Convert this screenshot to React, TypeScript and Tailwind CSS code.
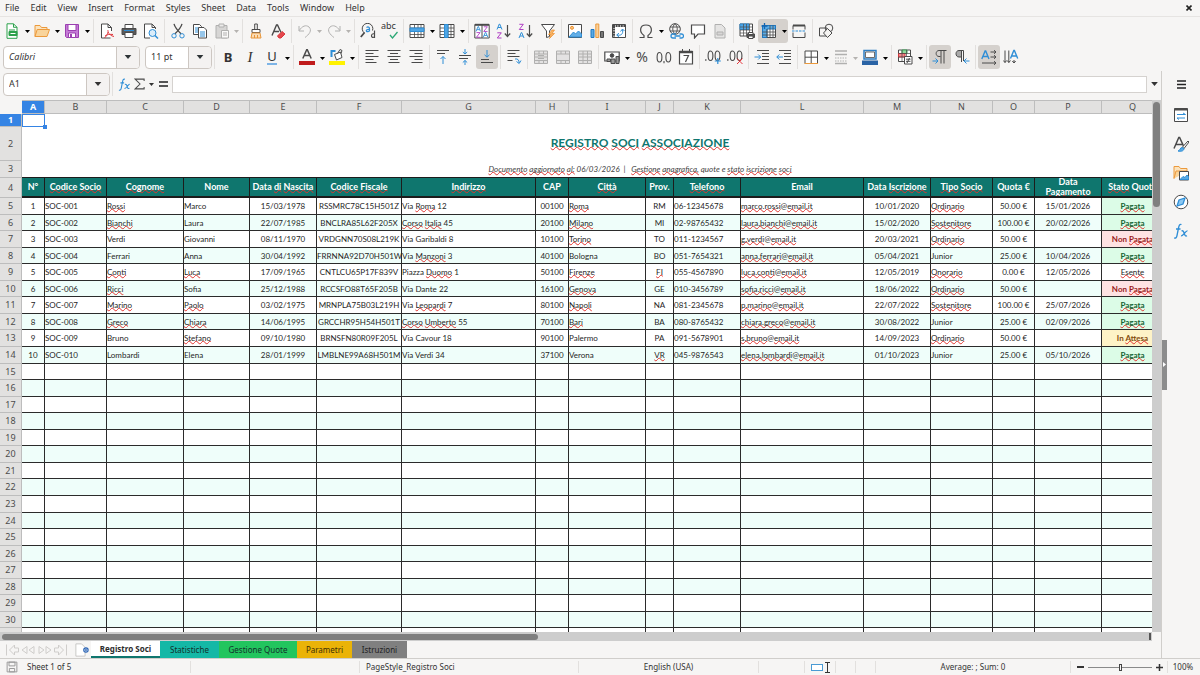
import { Fragment, useState } from 'react';
import type { ReactNode } from 'react';

const INK = '#4a4a4a';
const BLUE = '#2f8ed6';

type GlyphProps = { children: ReactNode; size?: string };

function Glyph({ children, size = 'w-4 h-4' }: GlyphProps) {
  return (
    <svg className={`${size} shrink-0`} viewBox="0 0 16 16" fill="none" stroke={INK} strokeWidth="1" aria-hidden="true">
      {children}
    </svg>
  );
}

function Caret({ className = 'w-[5px] h-[3px]' }: { className?: string }) {
  return (
    <svg className={className} viewBox="0 0 10 6" fill="currentColor" aria-hidden="true">
      <path d="M0 0h10L5 6z" />
    </svg>
  );
}

type ToolProps = { label: string; active?: boolean; disabled?: boolean; menu?: boolean; children: ReactNode };

function Tool({ label, active, disabled, menu, children }: ToolProps) {
  return (
    <div className={`flex h-6 shrink-0 rounded-[3px] ${active ? 'bg-[#d5d1cd]' : ''}`}>
      <button
        type="button"
        aria-label={label}
        disabled={disabled}
        className={`flex w-[22px] items-center justify-center ${disabled ? 'opacity-40 grayscale' : ''}`}
      >
        {children}
      </button>
      {menu && (
        <button
          type="button"
          aria-label={`${label} options`}
          disabled={disabled}
          className={`flex items-center justify-center pt-[2px] ${disabled ? 'w-[7px] text-[#b5b3b0]' : 'w-2 text-black'}`}
        >
          <Caret />
        </button>
      )}
    </div>
  );
}

function Sep() {
  return <div className="mx-[2px] h-6 w-px shrink-0 bg-[#e2e0de]" />;
}

/* ---------- standard toolbar icons ---------- */

const NewIcon = () => (
  <Glyph>
    <path d="M3 .8h6.500L13 4.300v11H3z" stroke="#2ca14b" fill="#fff" />
    <path d="M9.500 .8v3.500H13" stroke="#2ca14b" />
    <path d="M5 7h6" stroke="#2ca14b" />
    <path d="M5 8.500h8v4H5z" stroke="#2ca14b" fill="#2ca14b" />
    <path d="M6.500 10.500h5" stroke="#fff" />
  </Glyph>
);
const OpenIcon = () => (
  <Glyph>
    <path d="M1 13.500V2.500h5l1.500 2H13v2" stroke="#ec9a3c" fill="#fbe3bd" />
    <path d="M1 13.500 3.200 6.500H15.500L13 13.500z" stroke="#ec9a3c" fill="#f9d49b" />
  </Glyph>
);
const SaveIcon = () => (
  <Glyph>
    <path d="M1.500 1.500h13v13h-12l-1-1z" stroke="#9b3fb0" fill="#c57bd6" />
    <path d="M4 1.500h8v6H4z" stroke="#9b3fb0" fill="#fff" />
    <path d="M4.500 10h7v4.500h-7z" stroke="#9b3fb0" fill="#fff" />
    <path d="M6 11h2v3H6z" fill="#9b3fb0" stroke="none" />
  </Glyph>
);
const PdfIcon = () => (
  <Glyph>
    <path d="M11.500 15H2.500V1h6.500l3.500 3.500V8" fill="#fff" />
    <path d="M9 1v3.500h3.500" />
    <path d="M8.500 7c1.500 1 0 5-3 8M9 9c1 2 3 4 6 4.500M6 13c2-1.500 5-2 8-1.500" stroke="#e0383e" />
  </Glyph>
);
const PrintIcon = () => (
  <Glyph>
    <path d="M4 1.500h8V6H4z" fill="#fff" />
    <path d="M1 5.500h14v6H1z" fill="#5a5a5a" />
    <path d="M3 7.500h10" stroke={BLUE} />
    <path d="M4 9.500h8v5H4z" fill="#fff" />
  </Glyph>
);
const PreviewIcon = () => (
  <Glyph>
    <path d="M7 15H1.500V1H9l3.500 3.500V6M9 1v3.500h3.500" fill="#fff" />
    <circle cx="9.500" cy="10" r="3.500" stroke={BLUE} fill="#dbedfa" />
    <path d="m12 12.500 3 3" stroke={BLUE} strokeWidth="1.500" />
  </Glyph>
);
const CutIcon = () => (
  <Glyph>
    <path d="M4 .8c1 4 4 7 7 10M12 .8c-1 4-4 7-7 10" strokeWidth="1.300" />
    <circle cx="4" cy="12.800" r="2.200" stroke={BLUE} />
    <circle cx="12" cy="12.800" r="2.200" stroke={BLUE} />
  </Glyph>
);
const CopyIcon = () => (
  <Glyph>
    <path d="M1.500 1.500h6l2 2v8h-8z" fill="#fff" />
    <path d="M3 5h4M3 7h4M3 9h4" stroke={BLUE} />
    <path d="M6.500 4.500h5.500l2.500 2.500v8h-8z" fill="#fff" />
    <path d="M8 9h5M8 11h5M8 13h5" stroke={BLUE} />
  </Glyph>
);
const PasteIcon = () => (
  <Glyph>
    <path d="M2 2.500h11V15H2z" fill="#a9a9a9" />
    <path d="M5 1h5v3H5z" fill="#ddd" />
    <path d="M7.500 7.500h7V15h-7zM9 10h4M9 12h4" fill="#fff" />
  </Glyph>
);
const BrushIcon = () => (
  <Glyph>
    <path d="M6.700 1h2.600v5.500H6.700z" />
    <path d="M4 6.500h8v3H4z" fill="#fff" />
    <path d="M4 10h8l1 5H3z" stroke="#e8963a" fill="#fbdcb4" />
    <path d="M6.500 12v3M9.500 12v3" stroke="#e8963a" />
  </Glyph>
);
const ClearIcon = () => (
  <Glyph>
    <path d="M2 12.500 6.500 2h1L11 9.500M4 8.500h5" strokeWidth="1.400" />
    <path d="m7.500 13 4.500-4.500 3 2.500-4 4H9z" fill="#e5484d" stroke="#d9363c" />
  </Glyph>
);
const UndoIcon = ({ flip }: { flip?: boolean }) => (
  <svg className={`h-4 w-4 ${flip ? '-scale-x-100' : ''}`} viewBox="0 0 16 16" fill="none" stroke={INK} aria-hidden="true">
    <path d="M2 3v5h5M2.300 7.500C5 3 9 1.500 12 4c3.500 3.500 0 7.500-4 10.500" />
  </svg>
);
const FindIcon = () => (
  <Glyph>
    <path d="M4.500 10A5.300 5.300 0 1 1 12.500 7.500" />
    <path d="M4.500 9.500.8 14" strokeWidth="1.800" />
    <path d="M6.500 4.500c1.500-1 3-.5 3 1v3M9.500 6.500c-4-.5-4 2.500-1.500 2.200l1.500-1" stroke={BLUE} strokeWidth="1.200" />
    <path d="M14.500 7.500V15M14.500 11c-4-1.500-4 5 0 3" strokeWidth="1.200" />
  </Glyph>
);
const SpellIcon = () => (
  <span className="relative block h-4 w-4">
    <span className="absolute -left-px -top-[3px] font-['Noto_Sans'] text-[9px] leading-3 text-[#333]">abc</span>
    <svg className="absolute bottom-0 right-0 h-2 w-[9px]" viewBox="0 0 9 8" fill="none" stroke="#2ca876" strokeWidth="1.300">
      <path d="m1 4 2.500 3L8.500 1" />
    </svg>
  </span>
);
const GridIcon = ({ band }: { band: 'row' | 'col' }) => (
  <Glyph>
    <path d="M1 1.500h14v13H1z" fill="#fff" />
    <path d="M1 5h14M1 8.500h14M1 11.500h14M5.500 1.500v13M9 1.500v13M12 1.500v13" strokeWidth=".8" />
    <path d={band === 'row' ? 'M1 5h14v3.500H1z' : 'M5.500 1.500H9v13H5.500z'} fill="#4fa5e4" stroke={BLUE} />
  </Glyph>
);
const A_SHAPE = 'M0 5.500 2.300 0h.4L5 5.500M1 3.500h3';
const Z_SHAPE = 'M.3.3h4L.3 5.500h4.200';
const SortIcon = () => (
  <Glyph>
    <path d="M.8 1.500h14.400v13.500H.8z" fill="#fff" />
    <path d="M1 1.800h14" strokeWidth="2" />
    <path d="M8 2v13" />
    <g transform="translate(2 3.500) scale(.9)"><path d={A_SHAPE} stroke={BLUE} /></g>
    <g transform="translate(2.200 9.300) scale(.9)"><path d={Z_SHAPE} stroke="#b03fc4" /></g>
    <g transform="translate(9.500 3.500) scale(.9)"><path d={Z_SHAPE} stroke="#b03fc4" /></g>
    <g transform="translate(9.300 9.300) scale(.9)"><path d={A_SHAPE} stroke={BLUE} /></g>
  </Glyph>
);
const SortDirIcon = ({ desc }: { desc?: boolean }) => (
  <Glyph>
    <g transform={desc ? 'translate(1 9.500)' : 'translate(1 1)'}><path d={A_SHAPE} stroke={BLUE} /></g>
    <g transform={desc ? 'translate(1 1)' : 'translate(1 9.500)'}><path d={Z_SHAPE} stroke="#b03fc4" /></g>
    <path d="M11.500 2v11M8.800 10.500l2.700 3 2.700-3" strokeWidth="1.200" />
  </Glyph>
);
const FilterIcon = () => (
  <Glyph>
    <path d="M1.500 1.500h13L9.500 8v5.500l-3 1V8z" fill="#fff" />
    <path d="m12 7-3.500 4.500h2.500L9.500 15.500l5-5h-2.500L14.500 7z" fill="#f7b468" stroke="#ee8f2a" strokeWidth=".7" />
  </Glyph>
);
const ImageIcon = () => (
  <Glyph>
    <path d="M1.500 1.500h13v13h-13z" fill="#fff" />
    <path d="m2 14 4.500-5 2 2 3-3 3 3v3z" fill="#62aee6" stroke={BLUE} />
    <circle cx="5" cy="4.800" r="1.500" stroke="#ee8f2a" fill="#f9c98c" />
  </Glyph>
);
const ChartIcon = () => (
  <Glyph>
    <path d="M2 6.500h3v8H2z" fill="#5aaae4" stroke="#1f78c1" />
    <path d="M6.800 1h3v13.500h-3z" fill="#fad09a" stroke="#ec9a3c" />
    <path d="M11.500 8.500h3v6h-3z" fill="#777" />
  </Glyph>
);
const PivotIcon = () => (
  <Glyph>
    <path d="M1.500 1.500h13v13h-13z" fill="#fff" />
    <path d="M2 3h12M3 3v11" strokeWidth="2" strokeDasharray="2 .6" />
    <path d="M6 12c4 1 6.500-1 5.500-5.500M9.500 8.500l2-2.500 2 2M8 10.200 5.700 12 8 14" stroke={BLUE} />
  </Glyph>
);
const OmegaIcon = () => (
  <Glyph>
    <path d="M1.500 14.500h4.500v-2C1 9 1.500 2 8 2s7 7 2 10.500v2h4.500" strokeWidth="1.200" />
  </Glyph>
);
const LinkIcon = () => (
  <Glyph>
    <circle cx="7" cy="6" r="5.300" />
    <path d="M7 .7c-3 3-3 7.500 0 10.500 3-3 3-7.500 0-10.500zM2 4h10M2 8h10" strokeWidth=".9" />
    <path d="M8 15H5a1.900 1.900 0 0 1 0-4h3M11.500 11h2a1.900 1.900 0 0 1 0 4h-2M6.500 13h6" stroke={BLUE} strokeWidth="1.300" />
  </Glyph>
);
const CommentIcon = () => (
  <Glyph>
    <path d="M1.500 2h13v9H8l-3.500 4v-4h-3z" fill="#fff" strokeWidth="1.200" />
  </Glyph>
);
const PageIcon = () => (
  <Glyph>
    <path d="M3 1.500h6.500L13 5v10H3z" fill="#ccc" />
    <path d="M5 9h6v3H5z" fill="#aaa" />
  </Glyph>
);
const PrintAreaIcon = () => (
  <Glyph>
    <path d="M1 1h12.500v12H1z" fill="#fff" />
    <path d="M1 1h9v5.500H1z" fill="#4fa5e4" stroke={BLUE} />
    <path d="M1 4h12.500M1 7h12.500M1 10h12.500M4.500 1v12M7.500 1v12M10.500 1v12" strokeWidth=".7" />
    <path d="M8 11h7.500v3.500H8z" fill="#555" />
    <path d="M9.500 9.500h4.500v2H9.500zM9.500 13h4.500v2.500H9.500z" fill="#fff" />
  </Glyph>
);
const FreezeIcon = () => (
  <Glyph>
    <path d="M1.500 2.500h13v12h-13z" fill="#fff" />
    <path d="M1.500 2.500h13v3.500h-8.500v8.500H1.500z" fill="#5aaae4" stroke="#1f78c1" />
    <path d="M1.500 9h13M1.500 12h13M6 6v8.500M9 2.500v12M12 2.500v12" strokeWidth=".8" />
    <path d="M3.500 0v6M.5 3h6" stroke="#1565b0" strokeWidth="1.300" />
  </Glyph>
);
const SplitIcon = () => (
  <Glyph>
    <path d="M2 6.500v-4h12v4M2 9.500v5h12v-5" />
    <path d="M2 2.500h12" strokeWidth="2" />
    <path d="M1 8h14" stroke={BLUE} strokeDasharray="2.500 1" />
  </Glyph>
);
const ShapesIcon = () => (
  <Glyph>
    <path d="M1.500 5h7.500v8H1.500z" />
    <circle cx="11" cy="5" r="3.800" />
    <path d="m9.500 5.500 4.500 4.500-4.500 4.500L5.500 10z" fill="#f5f4f2" />
  </Glyph>
);

/* ---------- formatting toolbar icons ---------- */

const LINES: Record<string, string> = {
  left: 'M1.500 1.500h13M1.500 4.500h8M1.500 7.500h13M1.500 10.500h8M1.500 13.500h11',
  center: 'M1.500 1.500h13M4 4.500h8M1.500 7.500h13M4 10.500h8M2.500 13.500h11',
  right: 'M1.500 1.500h13M6.500 4.500h8M1.500 7.500h13M6.500 10.500h8M3.500 13.500h11',
};
const AlignIcon = ({ kind }: { kind: string }) => (
  <Glyph>
    <path d={LINES[kind]} />
  </Glyph>
);
const TopIcon = () => (
  <Glyph>
    <path d="M2 1.500h12M2 4.500h8" />
    <path d="M8 15V7.500M5.500 10 8 7.500l2.500 2.500" stroke={BLUE} />
  </Glyph>
);
const MiddleIcon = () => (
  <Glyph>
    <path d="M2 6.500h12M2 9.500h9" />
    <path d="M8 0v5M5.800 3 8 5l2.200-2M8 16v-4.500M5.800 13.500 8 11.500l2.200 2" stroke={BLUE} />
  </Glyph>
);
const BottomIcon = () => (
  <Glyph>
    <path d="M2 10.500h8M2 13.500h12" />
    <path d="M8 1v7M5.500 5.800 8 8.200l2.500-2.400" stroke={BLUE} />
  </Glyph>
);
const WrapIcon = () => (
  <Glyph>
    <path d="M1.500 1.500h12M1.500 4.500h8M1.500 7.500h12M1.500 11.500h5" />
    <path d="M9 10c3-.5 4 1 4.200 4M10.500 12.500l2.700 2 1.800-3" stroke={BLUE} />
  </Glyph>
);
const MergeIcon = ({ kind }: { kind: number }) => (
  <Glyph>
    <path d="M1.500 2h13v12.500h-13z" fill="#c8c8c8" />
    <path d="M1.500 5h13M1.500 11.500h13M6 2v3M10.500 2v3M6 11.500v3M10.500 11.500v3" />
    {kind === 0 && <path d="M1.500 8h13M5 6.500h6M5 9.500h6" />}
    {kind === 2 && <path d="M6 5v6.500M10.500 5v6.500M1.500 8h13" />}
  </Glyph>
);
const CurrencyIcon = () => (
  <Glyph>
    <path d="M.8 3h14.400V12H.8z" fill="#fff" strokeWidth="1.200" />
    <circle cx="8" cy="6.500" r="1.800" fill={INK} />
    <path d="M3 12.500h3.500V10H3zM7 14.500h4V10H7zM12 14.500h3V7.500h-3z" fill="#999" />
  </Glyph>
);
const CalendarIcon = () => (
  <Glyph>
    <path d="M1.500 2.500h13v12.500h-13z" fill="#fff" strokeWidth="1.200" />
    <path d="M1.500 3h13" strokeWidth="2.500" />
    <path d="M4.500 0v3M11.500 0v3" />
    <path d="M5.500 6.500h5L7.500 13" strokeWidth="1.200" />
  </Glyph>
);
const NumberIcon = () => (
  <Glyph>
    <path d="M3.500 3.500c-3.200 0-3.200 9.500 0 9.500s3.200-9.500 0-9.500zM12.300 3.500c-3.200 0-3.200 9.500 0 9.500s3.200-9.500 0-9.500zM8 12v2.200" strokeWidth="1.100" />
  </Glyph>
);
const DecimalIcon = ({ remove }: { remove?: boolean }) => (
  <Glyph>
    <path d="M5.500 2c-3.200 0-3.200 9.500 0 9.500s3.200-9.500 0-9.500zM12.500 2c-3.200 0-3.200 9.500 0 9.500s3.200-9.500 0-9.500z" strokeWidth="1.100" />
    <path d="M.8 10.200v1.600" strokeWidth="1.300" />
    {remove ? <path d="m10 9.500 5.500 5.500M15.500 9.500 10 15" stroke="#e5383e" /> : <path d="M12.800 9v6M9.800 12h6" stroke={BLUE} strokeWidth="1.200" />}
  </Glyph>
);
const IndentIcon = ({ out }: { out?: boolean }) => (
  <Glyph>
    <path d="M3 1.500h12M8 4.500h7M8 7.500h7M8 10.500h7M3 14.500h12" />
    <path d={out ? 'M7 8H.8M3.300 5.500.8 8l2.500 2.500' : 'M.5 8h6M4.200 5.500 6.700 8l-2.500 2.500'} stroke={BLUE} />
  </Glyph>
);
const BordersIcon = () => (
  <Glyph>
    <path d="M2 14.500V2h12.500v12.500M8.200 2v12M2 8.200h12.500" fill="#fff" />
    <path d="M1.500 14.500h13.500" stroke="#ec9a3c" />
  </Glyph>
);
const LineStyleIcon = () => (
  <Glyph>
    <path d="M2 2h12M2 5.500h12" strokeWidth="1.500" />
    <path d="M2 9h12M2 12h12" strokeDasharray="1.500 1" />
    <path d="M2 14.500h12" strokeWidth="1.500" />
  </Glyph>
);
const LineColorIcon = () => (
  <Glyph>
    <path d="M2 1.500h12v8.500H2z" stroke="#2f7fc4" strokeWidth="1.500" />
    <path d="M3.500 3h9v5.500h-9z" fill="#fff" strokeWidth=".8" />
    <path d="M0 11.500h16V16H0z" fill="#2a63a5" stroke="none" />
  </Glyph>
);
const ConditionalIcon = () => (
  <Glyph>
    <path d="M1.500 1h12v11.500h-12z" fill="#fff" />
    <path d="M5 1h5v3.500H5z" fill="#8fdc9c" stroke="#3aa657" />
    <path d="M1.500 4.500H8V8H1.500z" fill="#f0888b" stroke="#d9363c" />
    <path d="M1.500 4.500h12M1.500 8h12M5 1v11.500M9.500 1v6" strokeWidth=".7" />
    <path d="M7.500 7.500h7.500V15H7.500z" fill="#fff" />
    <path d="M9 10.200h4.500M9 12.300h4.500M12.500 9l-2.500 5" />
  </Glyph>
);
const PilcrowIcon = ({ rtl }: { rtl?: boolean }) => (
  <Glyph>
    {rtl ? (
      <>
        <path d="M5 1.500h2.500v6.500H5c-4 0-4-6.500 0-6.500z" fill="#aaa" />
        <path d="M7.500 1.500v11.500M9.500 12V1.500H5" />
        <path d="M15.500 12H10M12.500 9.500 10 12l2.500 2.500" stroke={BLUE} />
      </>
    ) : (
      <>
        <path d="M14.500 1.500H7c-3.800 0-3.800 6 0 6h1.500M9 1.500v13M12 1.500v13" />
        <path d="M.5 12h5M3.500 9.500 6 12l-2.500 2.500" stroke={BLUE} />
      </>
    )}
  </Glyph>
);
const DirectionIcon = ({ vertical }: { vertical?: boolean }) => (
  <Glyph>
    {vertical ? (
      <>
        <path d="M2 1.500v12M5.800 1.500v12M.3 11.500l1.700 2 1.700-2M4.200 11.500l1.600 2 1.700-2M11 11v3M9.300 12l1.700 2 1.700-2" />
        <path d="m7.500 9.500 3.300-8h.6l3.300 8M9 7h4.500" stroke={BLUE} strokeWidth="1.400" />
      </>
    ) : (
      <>
        <path d="M9.500 3h5M9.500 8h5M1 14h13M13 1.200 15 3l-2 1.800M13 6.200 15 8l-2 1.800M13 12.200l2 1.800-2 1.800" />
        <path d="m.8 10 3.300-8h.6l3.300 8M2.200 7.500h4.400" stroke={BLUE} strokeWidth="1.400" />
      </>
    )}
  </Glyph>
);
const FontColorIcon = () => (
  <Glyph>
    <path d="M3.800 9.500 7.700.8h.6l3.900 8.700M5.200 6.500h5.600" strokeWidth="1.500" />
    <path d="M0 12h16v4H0z" fill="#c01c1c" stroke="none" />
  </Glyph>
);
const HighlightIcon = () => (
  <Glyph>
    <path d="M2.500 8V2h4" stroke={BLUE} strokeWidth="2" />
    <path d="m5.500 5.500 6-2.500 1.500 5.500-5.500 2.500zM8.500 4.500l2.500-4 2 1-1 3" fill="#fff" />
    <path d="M0 12h16v4H0z" fill="#fff200" stroke="none" />
  </Glyph>
);
const FxIcon = ({ size }: { size?: string }) => (
  <Glyph size={size}>
    <path d="M8.500 1.500C6.500.8 6 2.500 5.500 5L4 12.500c-.4 2-1.200 3-2.800 2.300M3 6h4.500" stroke={BLUE} strokeWidth="1.300" />
    <path d="M8.500 8c1.500-.8 2.200.5 2.800 2.500s1.200 3 2.700 2.200M14.500 7.800c-2-.5-4 5.500-6.500 5" stroke={BLUE} strokeWidth="1.300" />
  </Glyph>
);

/* ---------- sheet data: words starting with "~" are flagged by the spell checker ---------- */

type Column = { key: string; width: number; title: string; align: 'left' | 'center' };

const COLUMNS: Column[] = [
  { key: 'A', width: 23, title: 'N°', align: 'center' },
  { key: 'B', width: 62, title: '~Codice ~Socio', align: 'left' },
  { key: 'C', width: 77, title: '~Cognome', align: 'left' },
  { key: 'D', width: 66, title: 'Nome', align: 'left' },
  { key: 'E', width: 67, title: 'Data ~di ~Nascita', align: 'center' },
  { key: 'F', width: 85, title: '~Codice ~Fiscale', align: 'center' },
  { key: 'G', width: 134, title: '~Indirizzo', align: 'left' },
  { key: 'H', width: 33, title: 'CAP', align: 'center' },
  { key: 'I', width: 77, title: '~Città', align: 'left' },
  { key: 'J', width: 28, title: 'Prov.', align: 'center' },
  { key: 'K', width: 67, title: '~Telefono', align: 'left' },
  { key: 'L', width: 123, title: 'Email', align: 'left' },
  { key: 'M', width: 67, title: 'Data ~Iscrizione', align: 'center' },
  { key: 'N', width: 62, title: '~Tipo ~Socio', align: 'left' },
  { key: 'O', width: 42, title: 'Quota €', align: 'center' },
  { key: 'P', width: 67, title: 'Data ~Pagamento', align: 'center' },
  { key: 'Q', width: 62, title: '~Stato Quota', align: 'center' },
  { key: '', width: 94, title: '', align: 'left' },
];

const MEMBERS: string[][] = [
  ['1', 'SOC-001', '~Rossi', 'Marco', '15/03/1978', 'RSSMRC78C15H501Z', 'Via ~Roma 12', '00100', '~Roma', 'RM', '06-12345678', '~marco.rossi @ ~email.it', '10/01/2020', '~Ordinario', '50.00 €', '15/01/2026', '~Pagata'],
  ['2', 'SOC-002', '~Bianchi', 'Laura', '22/07/1985', 'BNCLRA85L62F205X', '~Corso ~Italia 45', '20100', '~Milano', 'MI', '02-98765432', '~laura.bianchi @ ~email.it', '15/02/2020', '~Sostenitore', '100.00 €', '20/02/2026', '~Pagata'],
  ['3', 'SOC-003', 'Verdi', 'Giovanni', '08/11/1970', 'VRDGNN70S08L219K', 'Via Garibaldi 8', '10100', '~Torino', 'TO', '011-1234567', '~g.verdi @ ~email.it', '20/03/2021', '~Ordinario', '50.00 €', '', 'Non ~Pagata'],
  ['4', 'SOC-004', 'Ferrari', 'Anna', '30/04/1992', 'FRRNNA92D70H501W', 'Via ~Manzoni 3', '40100', 'Bologna', 'BO', '051-7654321', '~anna.ferrari @ ~email.it', '05/04/2021', 'Junior', '25.00 €', '10/04/2026', '~Pagata'],
  ['5', 'SOC-005', '~Conti', '~Luca', '17/09/1965', 'CNTLCU65P17F839V', 'Piazza ~Duomo 1', '50100', '~Firenze', '~FI', '055-4567890', '~luca.conti @ ~email.it', '12/05/2019', '~Onorario', '0.00 €', '12/05/2026', '~Esente'],
  ['6', 'SOC-006', '~Ricci', 'Sofia', '25/12/1988', 'RCCSFO88T65F205B', 'Via Dante 22', '16100', '~Genova', 'GE', '010-3456789', '~sofia.ricci @ ~email.it', '18/06/2022', '~Ordinario', '50.00 €', '', 'Non ~Pagata'],
  ['7', 'SOC-007', '~Marino', '~Paolo', '03/02/1975', 'MRNPLA75B03L219H', 'Via ~Leopardi 7', '80100', '~Napoli', 'NA', '081-2345678', '~p.marino @ ~email.it', '22/07/2022', '~Sostenitore', '100.00 €', '25/07/2026', '~Pagata'],
  ['8', 'SOC-008', '~Greco', '~Chiara', '14/06/1995', 'GRCCHR95H54H501T', '~Corso ~Umberto 55', '70100', '~Bari', 'BA', '080-8765432', '~chiara.greco @ ~email.it', '30/08/2022', 'Junior', '25.00 €', '02/09/2026', '~Pagata'],
  ['9', 'SOC-009', 'Bruno', '~Stefano', '09/10/1980', 'BRNSFN80R09F205L', 'Via Cavour 18', '90100', 'Palermo', 'PA', '091-5678901', '~s.bruno @ ~email.it', '14/09/2023', '~Ordinario', '50.00 €', '', 'In ~Attesa'],
  ['10', 'SOC-010', 'Lombardi', 'Elena', '28/01/1999', 'LMBLNE99A68H501M', 'Via Verdi 34', '37100', 'Verona', '~VR', '045-9876543', '~elena.lombardi @ ~email.it', '01/10/2023', 'Junior', '25.00 €', '05/10/2026', '~Pagata'],
];

const STATUS_STYLE: Record<string, string> = {
  '~Pagata': 'bg-[#dcfce7] text-[#166534] font-bold',
  'Non ~Pagata': 'bg-[#fee2e2] text-[#991b1b] font-bold',
  'In ~Attesa': 'bg-[#fef3c7] text-[#854d0e] font-bold',
};

const LAST_ROW = 30;
const BODY_ROWS = Array.from({ length: 27 }, (_, i) => i);

function Spelled({ text }: { text: string }) {
  return (
    <>
      {text.split(' ').map((word, i, all) => (
        <Fragment key={i}>
          {i > 0 && word !== '@' && all[i - 1] !== '@' && ' '}
          {word.startsWith('~') ? (
            <span className="underline decoration-[#e0342f] decoration-wavy decoration-1 -underline-offset-1 [text-decoration-skip-ink:none]">
              {word.slice(1)}
            </span>
          ) : (
            word
          )}
        </Fragment>
      ))}
    </>
  );
}

function RowHead({ n, active }: { n: number; active?: boolean }) {
  return (
    <th
      scope="row"
      className={`border-b border-r border-[#bdbdbd] p-0 text-center font-['Noto_Sans',sans-serif] text-[9px] leading-3 ${
        active ? 'bg-[#3584e4] font-bold text-white' : 'bg-[#e2e1e0] font-normal text-[#4c4c4c]'
      }`}
    >
      {n <= LAST_ROW && n}
    </th>
  );
}

function Sheet() {
  return (
    <table className="w-[1258px] table-fixed border-separate border-spacing-0 bg-white font-[Lato,sans-serif] text-[8px] leading-[10px] text-[#262626]">
      <colgroup>
        <col style={{ width: 22 }} />
        {COLUMNS.map((c) => (
          <col key={c.key} style={{ width: c.width }} />
        ))}
      </colgroup>
      <thead>
        <tr className="h-[14px]">
          <td className="bg-[#f6f5f4] p-0" />
          {COLUMNS.map((c) => (
            <th
              key={c.key}
              scope="col"
              className={`border-b border-r border-t border-[#bdbdbd] p-0 text-center font-['Noto_Sans',sans-serif] text-[9px] leading-3 ${
                c.key === 'A' ? 'bg-[#3584e4] font-bold text-white' : 'bg-[#e2e1e0] font-normal text-[#4c4c4c]'
              }`}
            >
              {c.key}
            </th>
          ))}
        </tr>
      </thead>
      <tbody>
        <tr className="h-[13px]">
          <RowHead n={1} active />
          <td className="relative p-0 outline outline-1 -outline-offset-1 outline-[#3584e4]">
            <span className="absolute -bottom-[2px] -right-[2px] block h-1 w-1 bg-[#3584e4]" />
          </td>
          <td colSpan={17} className="p-0" />
        </tr>
        <tr className="h-[34px]">
          <RowHead n={2} />
          <td colSpan={18} className="p-0 pb-[2px] text-center text-[12px] font-bold leading-4 text-[#0f766e]">
            <Spelled text="~REGISTRO ~SOCI ~ASSOCIAZIONE" />
          </td>
        </tr>
        <tr className="h-[17px]">
          <RowHead n={3} />
          <td colSpan={18} className="border-b border-[#1c1c1c] p-0 text-center italic text-[#444] whitespace-pre">
            <Spelled text="~Documento ~aggiornato ~al: 06/03/2026  |   ~Gestione ~anagrafica, quote e ~stato ~iscrizione ~soci" />
          </td>
        </tr>
        <tr className="h-5">
          <RowHead n={4} />
          {COLUMNS.map((c) => (
            <td key={c.key} className="overflow-hidden border-b-2 border-r border-[#1c1c1c] bg-[#0f766e] p-0 text-center text-[9px] font-bold leading-[10px] text-white">
              <div className={`flex h-[18px] items-center justify-center overflow-hidden ${c.key === 'P' ? 'px-2' : 'whitespace-nowrap pb-px'}`}>
                <span>
                  <Spelled text={c.title} />
                </span>
              </div>
            </td>
          ))}
        </tr>
        {BODY_ROWS.map((i) => (
          <tr key={i} className={`${(i % 9) % 2 ? 'h-4' : 'h-[17px]'} ${i % 2 ? 'bg-[#effefa]' : 'bg-white'}`}>
            <RowHead n={i + 5} />
            {COLUMNS.map((c, j) => {
              const value = MEMBERS[i]?.[j] ?? '';
              const status = c.key === 'Q' ? STATUS_STYLE[value] ?? '' : '';
              return (
                <td
                  key={c.key}
                  className={`whitespace-nowrap border-b border-r border-[#2b2b2b] p-0 ${c.align === 'center' ? 'text-center' : 'text-left'} ${status}`}
                >
                  {value && <Spelled text={value} />}
                </td>
              );
            })}
          </tr>
        ))}
      </tbody>
    </table>
  );
}

function PickList({ label, value, className }: { label: string; value: string; className: string }) {
  return (
    <div className={`grid h-[23px] shrink-0 grid-cols-[1fr_23px] overflow-hidden rounded border border-[#cdc7c2] bg-white ${className}`}>
      <select aria-label={label} className="col-span-2 col-start-1 row-start-1 appearance-none bg-transparent pl-[5px] text-[9px] outline-none" defaultValue={value}>
        <option>{value}</option>
      </select>
      <span className="pointer-events-none col-start-2 row-start-1 flex items-center justify-center border-l border-[#cdc7c2] bg-[#f4f2f1] text-[#2e3436]">
        <Caret className="h-1 w-2" />
      </span>
    </div>
  );
}

const MENUS = ['File', 'Edit', 'View', 'Insert', 'Format', 'Styles', 'Sheet', 'Data', 'Tools', 'Window', 'Help'];

const SHEET_TABS = [
  { name: 'Registro Soci', style: 'w-[69px] bg-white font-bold text-[#2b2b2b] border-b-2 border-[#0f766e]' },
  { name: 'Statistiche', style: 'w-[59px] bg-[#14b8a6] text-[#12302c]' },
  { name: 'Gestione Quote', style: 'w-[78px] bg-[#22c55e] text-[#12302c]' },
  { name: 'Parametri', style: 'w-[55px] bg-[#eab308] text-[#3a2d05]' },
  { name: 'Istruzioni', style: 'w-[55px] bg-[#808080] text-[#1f1f1f]' },
];

function MenuBar() {
  return (
    <nav className="flex h-[17px] items-center gap-px border-b border-[#e6e4e2] text-[9px] leading-3">
      {MENUS.map((m) => (
        <button key={m} type="button" className="px-[5px]">
          {m}
        </button>
      ))}
      <button type="button" aria-label="Close document" className="ml-auto mr-2 flex h-3 w-[6px] items-center">
        <svg className="h-[6px] w-[6px]" viewBox="0 0 6 6" stroke="#222" strokeWidth="1.600">
          <path d="m.5.5 5 5M5.500.5l-5 5" />
        </svg>
      </button>
    </nav>
  );
}

function StandardBar() {
  return (
    <div className="flex h-[26px] items-center pl-px pt-px">
      <Tool label="New" menu><NewIcon /></Tool>
      <Tool label="Open" menu><OpenIcon /></Tool>
      <Tool label="Save" menu><SaveIcon /></Tool>
      <Sep />
      <Tool label="Export as PDF"><PdfIcon /></Tool>
      <Tool label="Print"><PrintIcon /></Tool>
      <Tool label="Print preview"><PreviewIcon /></Tool>
      <Sep />
      <Tool label="Cut"><CutIcon /></Tool>
      <Tool label="Copy"><CopyIcon /></Tool>
      <Tool label="Paste" menu disabled><PasteIcon /></Tool>
      <Sep />
      <Tool label="Clone formatting"><BrushIcon /></Tool>
      <Tool label="Clear formatting"><ClearIcon /></Tool>
      <Sep />
      <Tool label="Undo" menu disabled><UndoIcon /></Tool>
      <Tool label="Redo" menu disabled><UndoIcon flip /></Tool>
      <Sep />
      <Tool label="Find and replace"><FindIcon /></Tool>
      <Tool label="Spelling"><SpellIcon /></Tool>
      <Sep />
      <Tool label="Row" menu><GridIcon band="row" /></Tool>
      <Tool label="Column" menu><GridIcon band="col" /></Tool>
      <Sep />
      <Tool label="Sort"><SortIcon /></Tool>
      <Tool label="Sort ascending"><SortDirIcon /></Tool>
      <Tool label="Sort descending"><SortDirIcon desc /></Tool>
      <Tool label="AutoFilter"><FilterIcon /></Tool>
      <Sep />
      <Tool label="Insert image"><ImageIcon /></Tool>
      <Tool label="Insert chart"><ChartIcon /></Tool>
      <Tool label="Pivot table"><PivotIcon /></Tool>
      <Sep />
      <Tool label="Special character" menu><OmegaIcon /></Tool>
      <Tool label="Hyperlink"><LinkIcon /></Tool>
      <Tool label="Comment"><CommentIcon /></Tool>
      <Tool label="Headers and footers" disabled><PageIcon /></Tool>
      <Sep />
      <Tool label="Print area"><PrintAreaIcon /></Tool>
      <Tool label="Freeze rows and columns" menu active><FreezeIcon /></Tool>
      <Tool label="Split window"><SplitIcon /></Tool>
      <Sep />
      <Tool label="Draw functions"><ShapesIcon /></Tool>
    </div>
  );
}

function FormatBar() {
  return (
    <div className="flex h-7 items-center pl-[3px]">
      <PickList label="Font name" value="Calibri" className="w-[137px] italic" />
      <PickList label="Font size" value="11 pt" className="ml-[5px] w-[67px]" />
      <Sep />
      <Tool label="Bold"><b className="text-[13px] leading-4">B</b></Tool>
      <Tool label="Italic"><i className="font-['Liberation_Serif',serif] text-[15px] leading-4">I</i></Tool>
      <Tool label="Underline" menu><span className="border-b-2 border-[#7db4e6] text-[13px] leading-[13px]">U</span></Tool>
      <Sep />
      <Tool label="Font color" menu><FontColorIcon /></Tool>
      <Tool label="Background color" menu><HighlightIcon /></Tool>
      <Sep />
      <Tool label="Align left"><AlignIcon kind="left" /></Tool>
      <Tool label="Center horizontally"><AlignIcon kind="center" /></Tool>
      <Tool label="Align right"><AlignIcon kind="right" /></Tool>
      <Sep />
      <Tool label="Align top"><TopIcon /></Tool>
      <Tool label="Center vertically"><MiddleIcon /></Tool>
      <Tool label="Align bottom" active><BottomIcon /></Tool>
      <Sep />
      <Tool label="Wrap text"><WrapIcon /></Tool>
      <Sep />
      <Tool label="Merge and center" disabled><MergeIcon kind={0} /></Tool>
      <Tool label="Merge cells" disabled><MergeIcon kind={1} /></Tool>
      <Tool label="Unmerge cells" disabled><MergeIcon kind={2} /></Tool>
      <Sep />
      <Tool label="Currency" menu><CurrencyIcon /></Tool>
      <Tool label="Percent"><span className="text-[14px] leading-4 text-[#4a4a4a]">%</span></Tool>
      <Tool label="Number"><NumberIcon /></Tool>
      <Tool label="Date"><CalendarIcon /></Tool>
      <Sep />
      <Tool label="Add decimal place"><DecimalIcon /></Tool>
      <Tool label="Delete decimal place"><DecimalIcon remove /></Tool>
      <Sep />
      <Tool label="Increase indent"><IndentIcon /></Tool>
      <Tool label="Decrease indent"><IndentIcon out /></Tool>
      <Sep />
      <Tool label="Borders" menu><BordersIcon /></Tool>
      <Tool label="Border style" menu disabled><LineStyleIcon /></Tool>
      <Tool label="Border color" menu><LineColorIcon /></Tool>
      <Sep />
      <Tool label="Conditional formatting" menu><ConditionalIcon /></Tool>
      <Sep />
      <Tool label="Left to right" active><PilcrowIcon /></Tool>
      <Tool label="Right to left"><PilcrowIcon rtl /></Tool>
      <Sep />
      <Tool label="Text direction horizontal" active><DirectionIcon /></Tool>
      <Tool label="Text direction vertical"><DirectionIcon vertical /></Tool>
    </div>
  );
}

function FormulaBar() {
  const [cell, setCell] = useState('A1');
  const [formula, setFormula] = useState('');

  return (
    <div className="flex h-[29px] items-center pb-[3px] pl-[3px]">
      <div className="flex h-[23px] w-[107px] shrink-0 overflow-hidden rounded border border-[#cdc7c2] bg-white">
        <input aria-label="Name box" value={cell} onChange={(e) => setCell(e.target.value)} className="w-0 flex-1 pl-[5px] text-[9px] outline-none" />
        <button type="button" aria-label="Named ranges" className="flex w-[23px] items-center justify-center border-l border-[#cdc7c2] bg-[#f4f2f1]">
          <Caret className="h-1 w-2" />
        </button>
      </div>
      <Sep />
      <button type="button" aria-label="Function wizard" className="flex w-[18px] justify-center">
        <FxIcon size="w-[13px] h-[13px]" />
      </button>
      <button type="button" aria-label="Select function" className="flex w-[14px] justify-center">
        <Glyph size="w-3 h-3">
          <path d="M13.500 4V1.500h-12L8 8l-6.500 6.500h12V12" strokeWidth="1.400" />
        </Glyph>
      </button>
      <button type="button" aria-label="Select function options" className="flex w-2 justify-center pt-px">
        <Caret />
      </button>
      <button type="button" aria-label="Formula" className="mx-1 flex w-[9px] flex-col gap-[2px]">
        <span className="h-[2px] w-full bg-[#555]" />
        <span className="h-[2px] w-full bg-[#555]" />
      </button>
      <input
        aria-label="Formula input"
        value={formula}
        onChange={(e) => setFormula(e.target.value)}
        className="h-[17px] w-0 flex-1 border border-[#d5d2cf] bg-white px-1 text-[9px] outline-none"
      />
      <button type="button" aria-label="Expand formula bar" className="flex w-[14px] justify-center">
        <Caret className="h-1 w-[7px]" />
      </button>
    </div>
  );
}

function TabStrip() {
  return (
    <div className="flex h-[17px] items-stretch text-[8px] leading-[10px]">
      <button type="button" aria-label="Scroll sheets" className="ml-[6px] flex w-[61px] items-center">
        <svg className="h-3 w-[61px]" viewBox="0 0 61 12" fill="none" stroke="#cfcdcb" aria-hidden="true">
          <path d="M.5.500v11M8.500 1 3.500 6l5 5V8h4V4h-4zM21 2.500 16 6l5 3.500zM28 2.500 23 6l5 3.500zM33 2.500 38 6l-5 3.500zM40 2.500 45 6l-5 3.500zM52.500 1l5 5-5 5V8h-4V4h4zM60.500.500v11" />
        </svg>
      </button>
      <button type="button" aria-label="Add sheet" className="ml-[6px] flex w-[18px] items-center justify-center">
        <Glyph size="w-[14px] h-[14px]">
          <path d="M1 1h6.500l4 4v10H1z" fill="#fff" stroke="#c4c2c0" />
          <circle cx="12.500" cy="8" r="2.500" fill="#fff" stroke="#2a63b5" strokeWidth="1.300" />
          <path d="M12.500 6.500v3M11 8h3" stroke="#2a63b5" />
        </Glyph>
      </button>
      {SHEET_TABS.map((t) => (
        <button key={t.name} type="button" className={`flex items-center justify-center whitespace-nowrap ${t.style}`}>
          {t.name}
        </button>
      ))}
    </div>
  );
}

function SideBar() {
  return (
    <aside className="flex w-[39px] shrink-0">
      <div className="flex w-[5px] items-center border-l border-[#d0cecb]">
        <button type="button" aria-label="Hide sidebar" className="flex h-[50px] w-[5px] shrink-0 items-center justify-center bg-[#8c8c8c]">
          <svg className="h-[5px] w-[3px]" viewBox="0 0 3 5" fill="#fff"><path d="m0 0 3 2.500L0 5z" /></svg>
        </button>
      </div>
      <div className="flex w-[30px] flex-col items-center">
        <button type="button" aria-label="Sidebar settings" className="flex h-[27px] w-full items-center justify-center">
          <svg className="h-[9px] w-[9px]" viewBox="0 0 9 9" stroke="#222" strokeWidth="1.400"><path d="M0 1h9M0 4.500h9M0 8h9" /></svg>
        </button>
        <button type="button" aria-label="Properties" className="flex h-[29px] w-full items-center justify-center pt-1">
          <Glyph>
            <path d="M1.500 1.500h13v13h-13z" fill="#fff" />
            <path d="M1.500 2.500h13" strokeWidth="2" />
            <path d="M4 7.500h8.500M10 6l2.500 1.500M12 11H4M6 12.500 4 11" stroke={BLUE} />
          </Glyph>
        </button>
        <button type="button" aria-label="Styles" className="flex h-[29px] w-full items-center justify-center pt-1">
          <Glyph>
            <path d="M1 12.500 5.800 1.500h.8L11 11M3 8.500h6.500" strokeWidth="1.500" />
            <path d="m15 5-5.500 6 1.500 1.500L16 6z" fill="#fff" />
            <path d="M9 11.500c-2 0-1.500 3-4 3.500 3 .8 6 0 6-2.500z" fill="#5aaae4" stroke={BLUE} />
          </Glyph>
        </button>
        <button type="button" aria-label="Gallery" className="flex h-[29px] w-full items-center justify-center pt-1">
          <Glyph>
            <path d="M1 13.500v-12h5l1.500 2H14v3" stroke="#ec9a3c" fill="#fbe3bd" />
            <path d="M1 13.500 3 6h11" stroke="#ec9a3c" fill="#f9d49b" />
            <path d="M6.500 6.500h9v8.500h-9z" fill="#fff" />
            <path d="m7 14.500 3-3 2 1 2-2.500 1.500 1.500v3z" fill="#5aaae4" stroke={BLUE} />
          </Glyph>
        </button>
        <button type="button" aria-label="Navigator" className="flex h-[29px] w-full items-center justify-center pt-1">
          <Glyph>
            <circle cx="8" cy="8" r="6.800" fill="#fff" />
            <path d="m12 4-2 6-6 2 2-6z" fill="#8cc8f2" stroke={BLUE} strokeWidth="1.300" />
          </Glyph>
        </button>
        <button type="button" aria-label="Functions" className="flex h-[29px] w-full items-center justify-center pt-1">
          <FxIcon />
        </button>
      </div>
    </aside>
  );
}

function StatusBar() {
  const [zoom, setZoom] = useState(50);

  return (
    <footer className="flex h-[17px] shrink-0 items-center border-t border-[#d0cecb] text-[8px] leading-[10px]">
      <div className="flex h-3 w-[191px] items-center gap-[9px] border-r border-[#e2e0de] pl-[6px]">
        <Glyph size="w-3 h-3">
          <path d="M1.500 1.500h13v13h-13zM4 1.500h8v5H4zM4.500 10h7v4.500h-7z" stroke="#999" strokeWidth="1.300" />
        </Glyph>
        Sheet 1 of 5
      </div>
      <div className="h-3 w-[169px] border-r border-[#e2e0de]" />
      <div className="flex h-3 w-[219px] items-center border-r border-[#e2e0de] pl-[6px]">PageStyle_Registro Soci</div>
      <div className="flex h-3 flex-1 items-center justify-center border-r border-[#e2e0de]">English (USA)</div>
      <div className="h-3 w-[46px] shrink-0 border-r border-[#e2e0de]" />
      <div className="flex h-3 w-[31px] shrink-0 items-center gap-[2px] border-r border-[#e2e0de] pl-[6px]">
        <span className="h-[7px] w-3 border border-[#4a9bd4] bg-white" />
        <svg className="h-[11px] w-[5px]" viewBox="0 0 5 11" fill="none" stroke="#333"><path d="M0 .5h5M2.500.5v10M0 10.500h5" /></svg>
      </div>
      <div className="h-3 w-5 shrink-0 border-r border-[#e2e0de]" />
      <div className="h-3 w-5 shrink-0 border-r border-[#e2e0de]" />
      <div className="flex h-3 w-[195px] shrink-0 items-center justify-center border-r border-[#e2e0de]">Average: ; Sum: 0</div>
      <div className="flex h-3 w-[97px] shrink-0 items-center gap-1 border-r border-[#e2e0de] pl-[6px]">
        <button type="button" aria-label="Zoom out" className="flex h-3 w-[7px] items-center"><span className="h-[2px] w-full bg-[#333]" /></button>
        <input
          type="range"
          aria-label="Zoom"
          value={zoom}
          onChange={(e) => setZoom(Number(e.target.value))}
          className="h-3 w-[64px] appearance-none bg-transparent [&::-webkit-slider-runnable-track]:h-px [&::-webkit-slider-runnable-track]:bg-[#8a8a8a] [&::-webkit-slider-thumb]:-mt-[3px] [&::-webkit-slider-thumb]:h-[7px] [&::-webkit-slider-thumb]:w-[3px] [&::-webkit-slider-thumb]:appearance-none [&::-webkit-slider-thumb]:border [&::-webkit-slider-thumb]:border-[#444] [&::-webkit-slider-thumb]:bg-[#f6f5f4]"
        />
        <button type="button" aria-label="Zoom in" className="flex h-3 w-[7px] items-center justify-center">
          <svg className="h-[7px] w-[7px]" viewBox="0 0 7 7" stroke="#333" strokeWidth="1.500"><path d="M0 3.500h7M3.500 0v7" /></svg>
        </button>
      </div>
      <div className="w-[32px] shrink-0 pr-[2px] text-center">100%</div>
    </footer>
  );
}

export default function App() {
  return (
    <div className="flex h-screen flex-col overflow-hidden bg-[#f6f5f4] font-['Noto_Sans',sans-serif] text-[#333]">
      <header className="shrink-0">
        <MenuBar />
        <StandardBar />
        <FormatBar />
      </header>
      <div className="flex min-h-0 flex-1">
        <main className="flex min-w-0 flex-1 flex-col">
          <FormulaBar />
          <div className="flex min-h-0 flex-1">
            <div className="min-w-0 flex-1 overflow-hidden">
              <Sheet />
            </div>
            <div className="w-[9px] shrink-0 bg-[#cdcdcd] px-px pt-[2px]">
              <div className="h-[105px] rounded-full bg-[#7f7f7f]" />
            </div>
          </div>
          <div className="mr-[9px] flex h-[9px] shrink-0 items-center bg-[#cdcdcd] pl-[2px] pr-px">
            <div className="h-[6px] w-[536px] rounded-full bg-[#7f7f7f]" />
            <span className="ml-auto h-[7px] w-[2px] bg-[#555]" />
          </div>
          <TabStrip />
        </main>
        <SideBar />
      </div>
      <StatusBar />
    </div>
  );
}
